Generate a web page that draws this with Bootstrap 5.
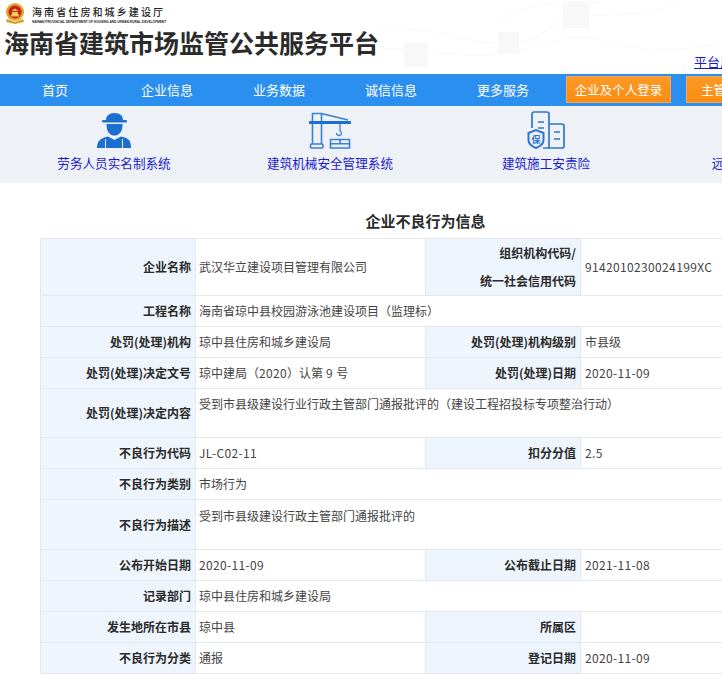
<!DOCTYPE html>
<html lang="zh-CN">
<head>
<meta charset="UTF-8">
<title>海南省建筑市场监管公共服务平台</title>
<link href="https://cdn.jsdelivr.net/npm/bootstrap@5.3.0/dist/css/bootstrap.min.css" rel="stylesheet">
<style>
html, body { overflow-x: hidden; }
body { font-family: "Noto Sans CJK SC", "Liberation Sans", sans-serif; font-size: 12px; color: #333; background: #fff; }
.site-top { height: 74px; padding: 3px 0 0 5px; position: relative; overflow: hidden; }
.top-deco { position: absolute; left: 0; top: 0; }
.top-inner { position: relative; }
.emblem { margin-left: 1px; }
.dept-name { font-size: 10px; line-height: 13px; letter-spacing: 2.1px; color: #222; font-weight: 500; white-space: nowrap; margin-top: 2px; }
.dept-en { font-size: 3.2px; line-height: 4px; color: #222; white-space: nowrap; font-family: "Liberation Sans", sans-serif; font-weight: 700; margin-top: 2px; }
.site-title { font-size: 25px; line-height: 30px; font-weight: 700; color: #2b2b2b; margin: 3px 0 0 -1px; white-space: nowrap; }
.manual-link { position: absolute; left: 694px; top: 54px; color: #1a1ad0; font-size: 13px; line-height: 16px; white-space: nowrap; }
.main-nav { height: 32px; background: #2b8ff0; padding-top: 2px; white-space: nowrap; flex-wrap: nowrap; }
.main-nav a.nav-item-link { width: 112px; flex: none; text-align: center; color: #fff; font-size: 13px; line-height: 28px; text-decoration: none; }
.main-nav a.nav-item-link:first-child { margin-left: -1px; }
.login-btn { flex: none; width: 105px; height: 27px; background: linear-gradient(#fd9a26, #fb8b10); border: 1px solid #f3a85c; color: #fff; font-size: 12.5px; line-height: 25px; text-align: center; text-decoration: none; }
.login-first { margin-left: 7px; margin-right: 15px; }
.sys-bar { height: 77px; background: #eef2f6; padding-left: 6px; flex-wrap: nowrap; overflow: hidden; }
.sys-item { flex: none; width: 216px; text-align: center; color: #1a1ad0; font-size: 12.6px; line-height: 16px; text-decoration: none; white-space: nowrap; }
.sys-icon { height: 43px; margin-bottom: 6px; display: flex; justify-content: center; align-items: flex-end; }
.shield-char { font-size: 9px; font-weight: 700; fill: #2f75cc; }
.page-head { font-size: 15px; line-height: 20px; font-weight: 700; color: #2b2b2b; text-align: center; margin: 28px 0 7px 0; width: 851px; }
.info-wrap { margin-left: 40px; width: 770px; margin-bottom: 20px; }
.info-table { width: 770px; table-layout: fixed; margin: 0; border-color: #e3e8ee; }
.info-table > tbody > tr > * { padding: 0 3px; vertical-align: middle; font-size: 12px; line-height: 16px; background: #fff; color: #444; box-shadow: none; border: 1px solid #e3e8ee; }
.info-table > tbody > tr > th { text-align: right; font-weight: 700; background: #eef5fc; color: #2b2b2b; padding-right: 4px; }
.info-table > tbody > tr > td.top-text { vertical-align: top; padding-top: 7px; }
.info-table > tbody > tr > td.top-low { padding-top: 8px; }
.info-table > tbody > tr > td.value-end { padding-left: 4px; }
.info-table th.two-line { line-height: 28px; }
.num-text { letter-spacing: .35px; }
.row-31 { height: 31px; }
.row-49 { height: 49px; }
.row-50 { height: 50px; }
.row-56 { height: 56px; }
.col-label { width: 155px; }
.col-value { width: 230px; }
</style>
</head>
<body>
<div class="site-top">
    <svg class="top-deco" width="722" height="74" viewBox="0 0 722 74" fill="none" stroke="#f9f9f9">
        <path d="M380 30c40-5 80 10 118 14s50-20 70-26 70 2 110-14"/>
        <path d="M380 50c30-6 70 10 118 4s60-20 90-16 60 20 130 6"/>
        <path d="M500 20c30-16 60-20 100-18"/>
        <rect x="404" y="43" width="24" height="24" fill="#f8f8f8" stroke="none"/>
        <rect x="498" y="32" width="21" height="22" fill="#f8f8f8" stroke="none"/>
        <rect x="563" y="2" width="26" height="26" fill="#f8f8f8" stroke="none"/>
    </svg>
    <div class="top-inner d-flex align-items-start">
        <svg class="emblem me-2" width="18" height="21" viewBox="0 0 18 21">
            <path d="M1 16l8 3 8-3 1 3-9 2-9-2z" fill="#d8a020"/>
            <circle cx="9" cy="9" r="9" fill="#e0a52a"/>
            <circle cx="9" cy="9" r="6.500" fill="#c8201a"/>
            <path d="M5 11.500h8v2H5zM6 9h6v2.500H6zM5.500 8h7L9 5.500z" fill="#f2cc55"/>
        </svg>
        <div>
            <div class="dept-name">海南省住房和城乡建设厅</div>
            <div class="dept-en">HAINAN PROVINCIAL DEPARTMENT OF HOUSING AND URBAN-RURAL DEVELOPMENT</div>
        </div>
    </div>
    <h1 class="site-title top-inner">海南省建筑市场监管公共服务平台</h1>
    <a class="manual-link" href="#">平台用户手册</a>
</div>

<nav class="main-nav d-flex">
    <a class="nav-item-link" href="#">首页</a>
    <a class="nav-item-link" href="#">企业信息</a>
    <a class="nav-item-link" href="#">业务数据</a>
    <a class="nav-item-link" href="#">诚信信息</a>
    <a class="nav-item-link" href="#">更多服务</a>
    <a class="login-btn login-first" href="#">企业及个人登录</a>
    <a class="login-btn" href="#">主管部门登录</a>
</nav>

<div class="sys-bar d-flex">
    <a class="sys-item" href="#">
        <div class="sys-icon">
            <svg width="36" height="36" viewBox="0 0 36 36" fill="#1a6fd0">
                <path d="M10 7C10 3 13 0 18.500 0S27 3 27 7z"/>
                <rect x="6" y="7" width="25" height="2.600" rx="1.300"/>
                <path d="M10.500 11h16c0 5-1 8-3 9.500-1.500 1.500-3 2-5 2s-3.500-.5-5-2c-2-1.500-3-4.500-3-9.500z"/>
                <path d="M1 35c0-5 2-8 5-9.500 2-1 4-1.500 6-2L18.500 27l6.500-3.500c2 .5 4 1 6 2 3 1.500 4 4.500 4 9.500z"/>
                <path d="M9.500 26v9M26.500 26v9" stroke="#eef2f6" stroke-width="1"/>
            </svg>
        </div>
        劳务人员实名制系统
    </a>
    <a class="sys-item" href="#">
        <div class="sys-icon">
            <svg width="42" height="37" viewBox="0 0 42 37" fill="none" stroke="#3a7fd5" stroke-width="1.600">
                <path d="M3.500 32V1.500h9V32M12.500 1.500L39 8"/>
                <path d="M1 10.500h40" stroke="#1a6fd0" stroke-width="3" stroke-linecap="round"/>
                <rect x="1.500" y="32" width="12.500" height="4" rx="1"/>
                <path d="M31 12v7c2 1 2 4-.5 4.500-2 0-3-1-3-2.500" stroke-width="1.300"/>
                <path d="M21.500 27.500h19v8.500h-19zM21.500 31.800h19M31 27.500v4.300"/>
            </svg>
        </div>
        建筑机械安全管理系统
    </a>
    <a class="sys-item" href="#">
        <div class="sys-icon">
            <svg width="38" height="38" viewBox="0 0 38 38" fill="none" stroke="#2f75cc" stroke-width="1.700">
                <path d="M5 17V3a2 2 0 0 1 2-2h13a2 2 0 0 1 2 2v34h-6"/>
                <path d="M22 13h13a2 2 0 0 1 2 2v20a2 2 0 0 1-2 2H22"/>
                <path d="M11 11h6M11 17h6M27 21h6M27 28h6"/>
                <path d="M1.500 22L9 19l7.500 3v7c0 4-3.500 6.500-7.500 8C5 35.500 1.500 33 1.500 29z" fill="#eef2f6" stroke-width="2"/>
                <text class="shield-char" x="9" y="31.500" text-anchor="middle" stroke="none">保</text>
            </svg>
        </div>
        建筑施工安责险
    </a>
    <a class="sys-item" href="#">
        <div class="sys-icon"></div>
        远程视频监控系统
    </a>
</div>

<h2 class="page-head">企业不良行为信息</h2>

<div class="info-wrap">
    <table class="table table-bordered info-table">
        <colgroup><col class="col-label"><col class="col-value"><col class="col-label"><col class="col-value"></colgroup>
        <tbody>
            <tr class="row-56">
                <th>企业名称</th><td>武汉华立建设项目管理有限公司</td>
                <th class="two-line">组织机构代码/<br>统一社会信用代码</th><td class="num-text value-end">9142010230024199XC</td>
            </tr>
            <tr class="row-31"><th>工程名称</th><td colspan="3">海南省琼中县校园游泳池建设项目（监理标）</td></tr>
            <tr class="row-31"><th>处罚(处理)机构</th><td>琼中县住房和城乡建设局</td><th>处罚(处理)机构级别</th><td class="value-end">市县级</td></tr>
            <tr class="row-31"><th>处罚(处理)决定文号</th><td>琼中建局（<span class="num-text">2020</span>）认第<span class="num-text"> 9 </span>号</td><th>处罚(处理)日期</th><td class="num-text value-end">2020-11-09</td></tr>
            <tr class="row-49"><th>处罚(处理)决定内容</th><td colspan="3" class="top-text">受到市县级建设行业行政主管部门通报批评的（建设工程招投标专项整治行动）</td></tr>
            <tr class="row-31"><th>不良行为代码</th><td class="num-text">JL-C02-11</td><th>扣分分值</th><td class="num-text value-end">2.5</td></tr>
            <tr class="row-31"><th>不良行为类别</th><td colspan="3">市场行为</td></tr>
            <tr class="row-50"><th>不良行为描述</th><td colspan="3" class="top-text top-low">受到市县级建设行政主管部门通报批评的</td></tr>
            <tr class="row-31"><th>公布开始日期</th><td class="num-text">2020-11-09</td><th>公布截止日期</th><td class="num-text value-end">2021-11-08</td></tr>
            <tr class="row-31"><th>记录部门</th><td colspan="3">琼中县住房和城乡建设局</td></tr>
            <tr class="row-31"><th>发生地所在市县</th><td>琼中县</td><th>所属区</th><td class="value-end"></td></tr>
            <tr class="row-31"><th>不良行为分类</th><td>通报</td><th>登记日期</th><td class="num-text value-end">2020-11-09</td></tr>
        </tbody>
    </table>
</div>
<script src="https://cdn.jsdelivr.net/npm/bootstrap@5.3.0/dist/js/bootstrap.bundle.min.js"></script>
</body>
</html>
